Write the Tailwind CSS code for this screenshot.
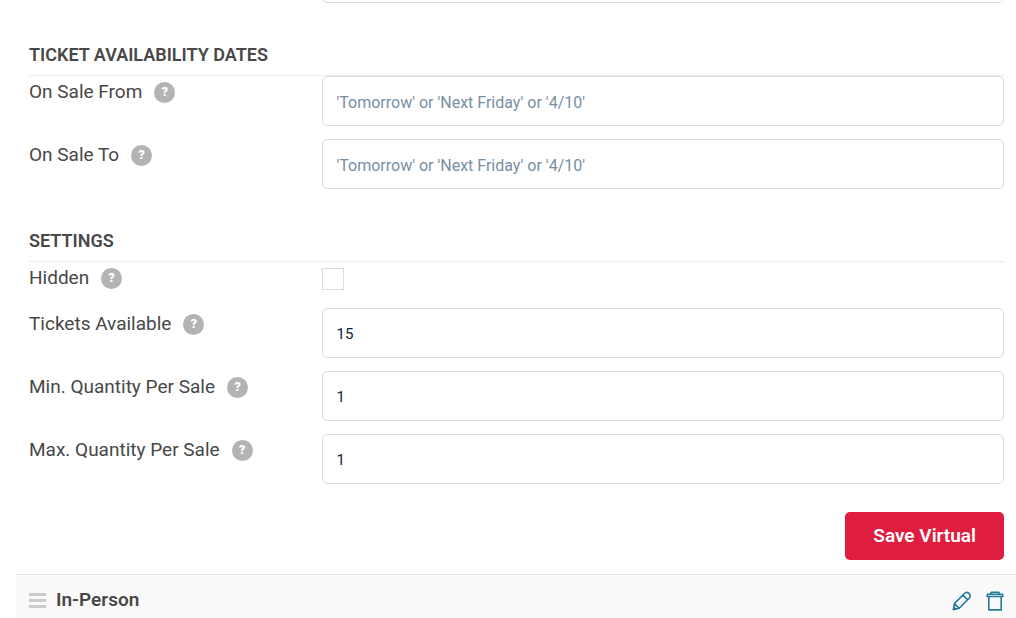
<!DOCTYPE html>
<html lang="en">
<head>
<meta charset="utf-8">
<meta name="viewport" content="width=device-width, initial-scale=1">
<title>Edit tickets</title>
<script src="https://cdn.jsdelivr.net/npm/@tailwindcss/browser@4"></script>
</head>
<body class="h-screen overflow-hidden bg-white font-[Roboto,sans-serif] text-[#484848]">
<main class="pl-4">
  <form class="pl-[13px] pr-3">
    <div class="grid grid-cols-[30%_70%]">
      <textarea aria-label="Description" class="col-start-2 -mt-12 h-[51px] resize-none rounded-[5px] border border-[#dcdcdc]"></textarea>
    </div>

    <section class="pt-8">
      <h2 class="h-[41px] border-b border-[#ececec] text-lg leading-10 font-semibold">TICKET AVAILABILITY DATES</h2>
      <div class="flex flex-col gap-[13px]">
        <div class="grid grid-cols-[30%_70%]">
          <div class="flex h-8 items-center gap-3 text-[19px]"><label for="from">On Sale From</label><button type="button" aria-label="Help: On Sale From" class="size-[21px] rounded-full bg-[#b3b3b3] text-[13px] leading-5 font-black text-white">?</button></div>
          <input id="from" type="text" placeholder="'Tomorrow' or 'Next Friday' or '4/10'" class="h-[50px] w-full rounded-[5px] border border-[#dcdcdc] px-3.5 pt-0.5 text-base text-[#0a2540] placeholder:text-[#788fa3]">
        </div>
        <div class="grid grid-cols-[30%_70%]">
          <div class="flex h-8 items-center gap-3 text-[19px]"><label for="to">On Sale To</label><button type="button" aria-label="Help: On Sale To" class="size-[21px] rounded-full bg-[#b3b3b3] text-[13px] leading-5 font-black text-white">?</button></div>
          <input id="to" type="text" placeholder="'Tomorrow' or 'Next Friday' or '4/10'" class="h-[50px] w-full rounded-[5px] border border-[#dcdcdc] px-3.5 pt-0.5 text-base text-[#0a2540] placeholder:text-[#788fa3]">
        </div>
      </div>
    </section>

    <section class="pt-8">
      <h2 class="h-[41px] border-b border-[#ececec] text-lg leading-10 font-semibold">SETTINGS</h2>
      <div class="grid grid-cols-[30%_70%] pb-3.5">
        <div class="flex h-8 items-center gap-3 text-[19px]"><label for="hidden">Hidden</label><button type="button" aria-label="Help: Hidden" class="size-[21px] rounded-full bg-[#b3b3b3] text-[13px] leading-5 font-black text-white">?</button></div>
        <input id="hidden" type="checkbox" class="mt-1.5 size-[22px] appearance-none border border-[#dcdcdc] bg-white checked:bg-[#24799b]">
      </div>
      <div class="flex flex-col gap-[13px]">
        <div class="grid grid-cols-[30%_70%]">
          <div class="flex h-8 items-center gap-3 text-[19px]"><label for="available">Tickets Available</label><button type="button" aria-label="Help: Tickets Available" class="size-[21px] rounded-full bg-[#b3b3b3] text-[13px] leading-5 font-black text-white">?</button></div>
          <input id="available" type="text" value="15" class="h-[50px] w-full rounded-[5px] border border-[#dcdcdc] px-3.5 pt-0.5 text-[15px] text-[#0a2540]">
        </div>
        <div class="grid grid-cols-[30%_70%]">
          <div class="flex h-8 items-center gap-3 text-[19px]"><label for="min">Min. Quantity Per Sale</label><button type="button" aria-label="Help: Min. Quantity Per Sale" class="size-[21px] rounded-full bg-[#b3b3b3] text-[13px] leading-5 font-black text-white">?</button></div>
          <input id="min" type="text" value="1" class="h-[50px] w-full rounded-[5px] border border-[#dcdcdc] px-3.5 pt-0.5 text-[15px] text-[#0a2540]">
        </div>
        <div class="grid grid-cols-[30%_70%]">
          <div class="flex h-8 items-center gap-3 text-[19px]"><label for="max">Max. Quantity Per Sale</label><button type="button" aria-label="Help: Max. Quantity Per Sale" class="size-[21px] rounded-full bg-[#b3b3b3] text-[13px] leading-5 font-black text-white">?</button></div>
          <input id="max" type="text" value="1" class="h-[50px] w-full rounded-[5px] border border-[#dcdcdc] px-3.5 pt-0.5 text-[15px] text-[#0a2540]">
        </div>
      </div>
    </section>

    <div class="flex justify-end pt-7 pb-3.5">
      <button type="submit" class="h-12 rounded-[5px] bg-[#df1d3f] px-7 text-[19px] font-semibold text-white">Save Virtual</button>
    </div>
  </form>

  <section class="flex h-[52px] items-center border-t border-[#e6e6e6] bg-[#fafafa] pr-3 pl-[13px]">
    <button type="button" aria-label="Reorder" class="flex w-[17px] flex-col gap-[3px]">
      <span class="h-[3px] bg-[#cbcbcb]"></span><span class="h-[3px] bg-[#cbcbcb]"></span><span class="h-[3px] bg-[#cbcbcb]"></span>
    </button>
    <h2 class="grow pl-2.5 text-[19px] font-semibold">In-Person</h2>
    <div class="flex items-center gap-3.5">
      <button type="button" aria-label="Edit In-Person" class="text-[#24799b]">
        <svg class="size-5" viewBox="0 0 20 20" fill="none" stroke="currentColor" stroke-width="1.6" stroke-linejoin="round"><path d="M1.500 18.500l.9-5.900L12.200 2.800c1.700-1.700 3.600-1.500 4.900-.2s1.500 3.200-.2 4.900L7.200 17.300zM11 4.200l4.700 4.700M2.400 12.600l4.800 4.700"/><path d="M1.500 18.500l.4-2.300 1.900 1.900z" fill="currentColor"/></svg>
      </button>
      <button type="button" aria-label="Delete In-Person" class="text-[#24799b]">
        <svg class="h-5 w-[18px]" viewBox="0 0 18 20" fill="none" stroke="currentColor" stroke-width="1.600" stroke-linejoin="round"><path d="M1 5.500l.6-2.200h14.800l.6 2.200zM4.500 3.300l.7-2.100h7.600l.7 2.100M2.800 5.500v13.400h12.400V5.500"/></svg>
      </button>
    </div>
  </section>
</main>
</body>
</html>
